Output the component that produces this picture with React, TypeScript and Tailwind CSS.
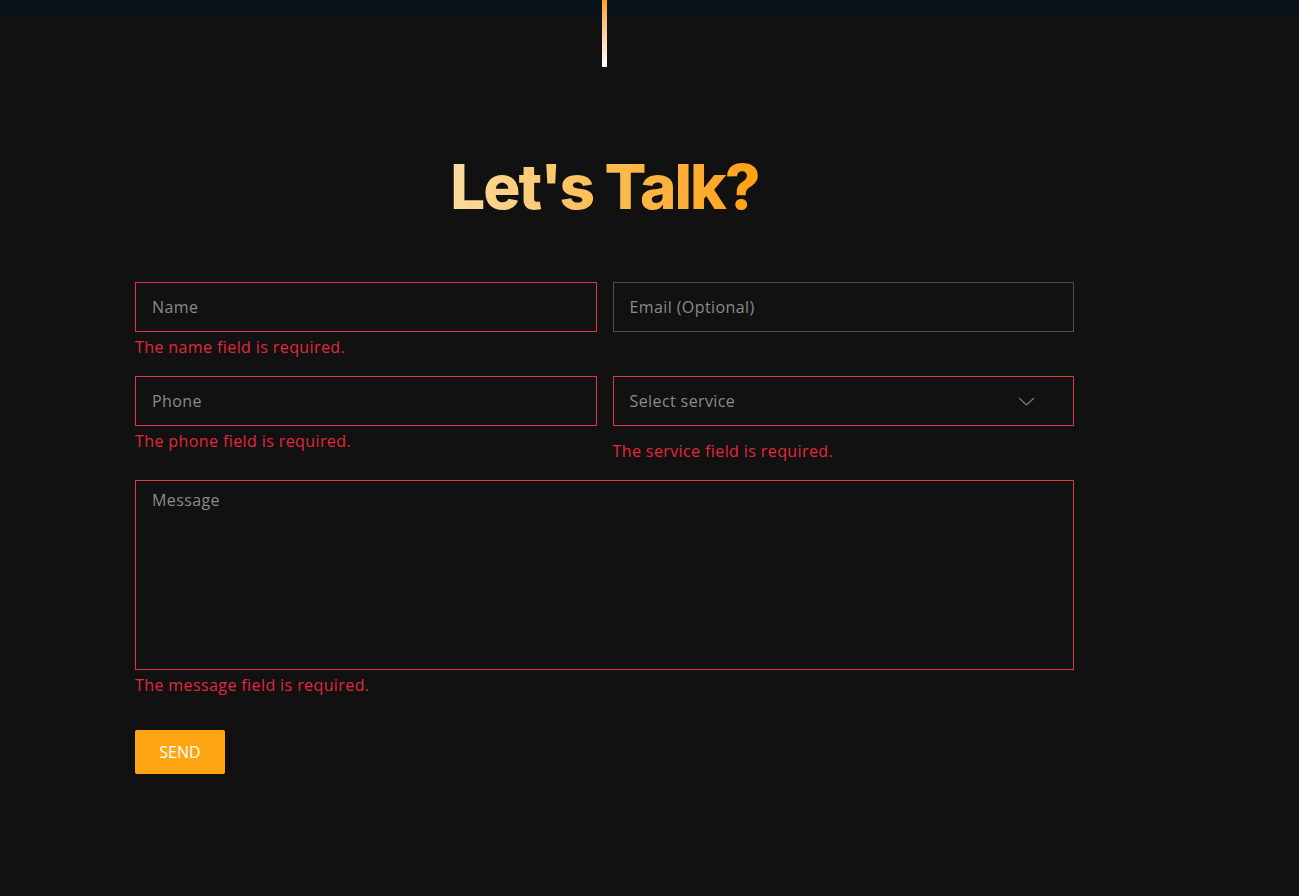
import React from 'react';

const font = { fontFamily: '"Open Sans", "Liberation Sans", sans-serif' };

const ErrorText = ({ children, className = '' }: { children: React.ReactNode; className?: string }) => (
  <p className={`mt-[4px] text-[16px] leading-[22px] tracking-[0.4px] text-[#e0293b] ${className}`}>{children}</p>
);

const inputBase =
  'h-[50px] w-full bg-[#111111] border px-4 text-[16px] tracking-[0.4px] text-white placeholder:text-[#8a8a8a] outline-none';

export default function App() {
  return (
    <div className="min-h-[896px] bg-[#111111] relative" style={font}>
      <div className="h-[18px] bg-[#0a1119]" />
      <div className="ml-[135px] w-[939px]">
        <div className="relative h-[49px]">
          <div className="absolute left-[467px] top-[-18px] h-[67px] w-[5px] bg-gradient-to-b from-[#ff9f0a] to-white" />
        </div>
        <h1 className="mt-[85px] text-center text-[62px] leading-[70px] font-extrabold tracking-[-2px]" style={{ fontFamily: 'Inter, "Liberation Sans", sans-serif' }}>
          <span className="bg-gradient-to-r from-[#fadb9f] via-[#fbbd50] to-[#ffa010] bg-clip-text text-transparent">
            Let's Talk?
          </span>
        </h1>

        <form className="mt-[60px]" onSubmit={e => e.preventDefault()}>
          <div className="grid grid-cols-2 gap-x-4 gap-y-[18px]">
            <div>
              <input placeholder="Name" className={`${inputBase} border-[#dc3545]`} />
              <ErrorText>The name field is required.</ErrorText>
            </div>
            <div>
              <input placeholder="Email (Optional)" className={`${inputBase} border-[#4d4d4d]`} />
            </div>
            <div>
              <input placeholder="Phone" className={`${inputBase} border-[#dc3545]`} />
              <ErrorText>The phone field is required.</ErrorText>
            </div>
            <div>
              <div className={`${inputBase} border-[#dc3545] flex items-center justify-between pr-[38px]`}>
                <span className="text-[#8a8a8a]">Select service</span>
                <svg width="17" height="9" viewBox="0 0 17 9" fill="none" stroke="#7a7a7a" strokeWidth="1.2">
                  <path d="M1 1l7.5 7L16 1" />
                </svg>
              </div>
              <ErrorText className="mt-[14px]">The service field is required.</ErrorText>
            </div>
          </div>

          <div className="mt-[18px]">
            <textarea
              placeholder="Message"
              className="block h-[190px] w-full resize-none bg-[#111111] border border-[#dc3545] px-4 pt-[8px] text-[16px] leading-[22px] tracking-[0.4px] text-white placeholder:text-[#8a8a8a] outline-none"
            />
            <ErrorText>The message field is required.</ErrorText>
          </div>

          <button className="mt-[34px] h-[44px] w-[90px] rounded-[2px] bg-[#ffa514] text-[16px] text-white">
            SEND
          </button>
        </form>
      </div>
    </div>
  );
}
